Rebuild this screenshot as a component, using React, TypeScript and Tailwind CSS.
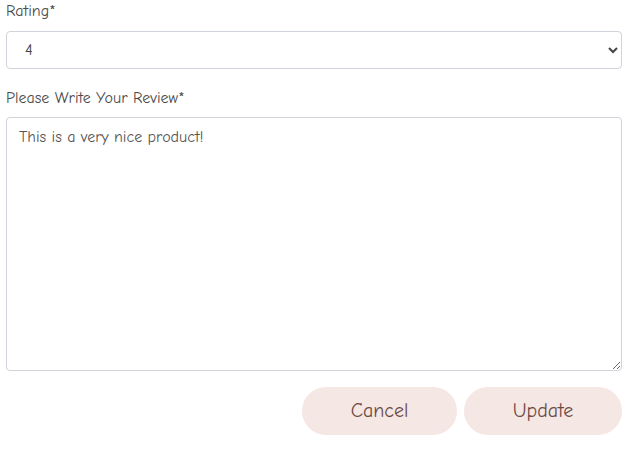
import React, { useState } from 'react';

const font = { fontFamily: '"Comic Neue", Lato, "Noto Sans", sans-serif' };

export default function App() {
  const [rating, setRating] = useState('4');
  const [review, setReview] = useState('This is a very nice product!');

  return (
    <div className="w-[636px] h-[449px] bg-white pl-[6px] pr-[14px]" style={font}>
      {/* Rating */}
      <label className="block text-[16px] leading-[22px] text-[#4a4a4a]">Rating*</label>
      <select
        value={rating}
        onChange={(e) => setRating(e.target.value)}
        className="mt-[9px] block w-full h-[38px] rounded-[4px] border border-[#ced4da] bg-white pl-[14px] pr-2 text-[16px] text-[#444] outline-none"
      >
        <option>1</option>
        <option>2</option>
        <option>3</option>
        <option>4</option>
        <option>5</option>
      </select>

      {/* Review */}
      <label className="mt-[18px] block text-[16px] leading-[22px] text-[#4a4a4a]">
        Please Write Your Review*
      </label>
      <textarea
        value={review}
        onChange={(e) => setReview(e.target.value)}
        className="mt-[8px] block w-full h-[254px] rounded-[4px] border border-[#ced4da] px-[12px] py-[8px] text-[16px] leading-[22px] text-[#555] outline-none"
      />

      {/* Actions */}
      <div className="mt-[16px] flex justify-end gap-[7px]">
        <button className="w-[155px] h-[48px] rounded-full bg-[#f5e7e4] text-[20px] text-[#6b4a44]">
          Cancel
        </button>
        <button className="w-[158px] h-[48px] rounded-full bg-[#f5e7e4] text-[20px] text-[#6b4a44]">
          Update
        </button>
      </div>
    </div>
  );
}
